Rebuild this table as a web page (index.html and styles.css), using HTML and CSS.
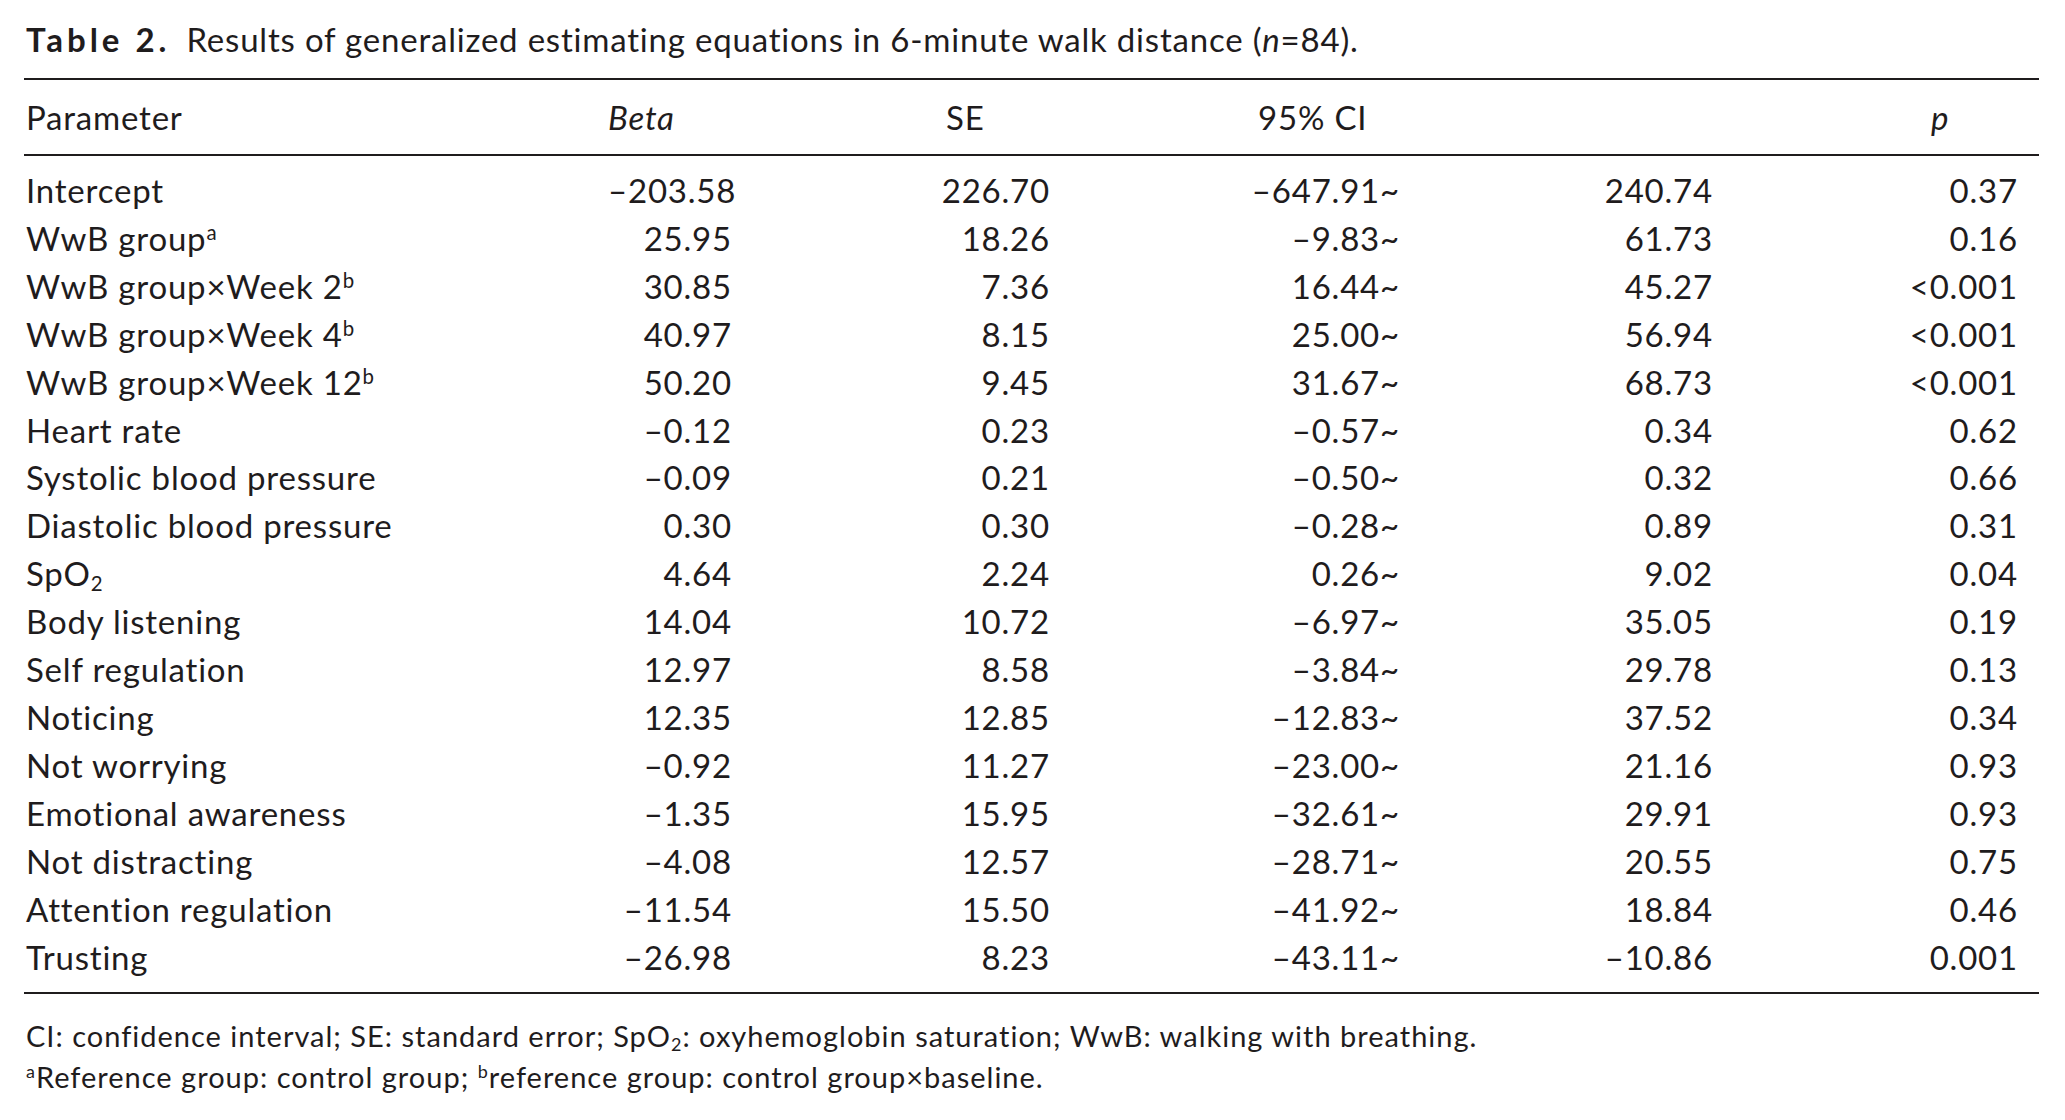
FILE: index.html
```html
<!DOCTYPE html>
<html lang="en">
<head>
<meta charset="utf-8">
<title>Table 2</title>
<link rel="stylesheet" href="styles.css">
</head>
<body>
<div class="page">
  <p class="caption"><span class="label">Table 2.</span>Results of generalized estimating equations in 6-minute walk distance (<i>n</i>=84).</p>
  <table class="results">
    <colgroup>
      <col class="c-param"><col class="c-beta"><col class="c-se"><col class="c-lo"><col class="c-hi"><col class="c-p">
    </colgroup>
    <thead>
      <tr>
        <th class="h-param">Parameter</th>
        <th class="h-beta"><i>Beta</i></th>
        <th class="h-se">SE</th>
        <th class="h-ci">95% CI</th>
        <th></th>
        <th class="h-p"><i>p</i></th>
      </tr>
    </thead>
    <tbody>
      <tr><td>Intercept</td><td>–203.58</td><td>226.70</td><td>–647.91~</td><td>240.74</td><td>0.37</td></tr>
      <tr><td>WwB group<sup>a</sup></td><td>25.95</td><td>18.26</td><td>–9.83~</td><td>61.73</td><td>0.16</td></tr>
      <tr><td>WwB group×Week 2<sup>b</sup></td><td>30.85</td><td>7.36</td><td>16.44~</td><td>45.27</td><td>&lt;0.001</td></tr>
      <tr><td>WwB group×Week 4<sup>b</sup></td><td>40.97</td><td>8.15</td><td>25.00~</td><td>56.94</td><td>&lt;0.001</td></tr>
      <tr><td>WwB group×Week 12<sup>b</sup></td><td>50.20</td><td>9.45</td><td>31.67~</td><td>68.73</td><td>&lt;0.001</td></tr>
      <tr><td>Heart rate</td><td>–0.12</td><td>0.23</td><td>–0.57~</td><td>0.34</td><td>0.62</td></tr>
      <tr><td>Systolic blood pressure</td><td>–0.09</td><td>0.21</td><td>–0.50~</td><td>0.32</td><td>0.66</td></tr>
      <tr><td>Diastolic blood pressure</td><td>0.30</td><td>0.30</td><td>–0.28~</td><td>0.89</td><td>0.31</td></tr>
      <tr><td>SpO<sub>2</sub></td><td>4.64</td><td>2.24</td><td>0.26~</td><td>9.02</td><td>0.04</td></tr>
      <tr><td>Body listening</td><td>14.04</td><td>10.72</td><td>–6.97~</td><td>35.05</td><td>0.19</td></tr>
      <tr><td>Self regulation</td><td>12.97</td><td>8.58</td><td>–3.84~</td><td>29.78</td><td>0.13</td></tr>
      <tr><td>Noticing</td><td>12.35</td><td>12.85</td><td>–12.83~</td><td>37.52</td><td>0.34</td></tr>
      <tr><td>Not worrying</td><td>–0.92</td><td>11.27</td><td>–23.00~</td><td>21.16</td><td>0.93</td></tr>
      <tr><td>Emotional awareness</td><td>–1.35</td><td>15.95</td><td>–32.61~</td><td>29.91</td><td>0.93</td></tr>
      <tr><td>Not distracting</td><td>–4.08</td><td>12.57</td><td>–28.71~</td><td>20.55</td><td>0.75</td></tr>
      <tr><td>Attention regulation</td><td>–11.54</td><td>15.50</td><td>–41.92~</td><td>18.84</td><td>0.46</td></tr>
      <tr><td>Trusting</td><td>–26.98</td><td>8.23</td><td>–43.11~</td><td>–10.86</td><td>0.001</td></tr>
    </tbody>
  </table>
  <div class="notes">
    <p>CI: confidence interval; SE: standard error; SpO<sub>2</sub>: oxyhemoglobin saturation; WwB: walking with breathing.</p>
    <p><sup>a</sup>Reference group: control group; <sup>b</sup>reference group: control group×baseline.</p>
  </div>
</div>
</body>
</html>
```
FILE: styles.css
```css
html, body {
  margin: 0;
  padding: 0;
  background: #ffffff;
}

body {
  font-family: Lato, "Open Sans", "Noto Sans", sans-serif;
  color: #1f1c1d;
}

.page {
  padding: 15px 26px 0 24px;
  width: 2015px;
}

.caption {
  margin: 0 0 15px 2px;
  font-size: 33px;
  letter-spacing: 0.8px;
  line-height: 48px;
}

.caption .label {
  font-weight: 700;
  letter-spacing: 4px;
  margin-right: 16px;
}

.results {
  width: 2015px;
  border-collapse: collapse;
  table-layout: fixed;
  font-size: 33px;
  letter-spacing: 0.8px;
  border-top: 2px solid #1f1c1d;
  border-bottom: 2px solid #1f1c1d;
}

.c-param { width: 584px; }
.c-beta { width: 124px; }
.c-se { width: 318px; }
.c-lo { width: 350px; }
.c-hi { width: 313px; }
.c-p { width: 326px; }

.results thead th {
  font-weight: 400;
  text-align: left;
  height: 74px;
  padding: 0;
  line-height: 48px;
  border-bottom: 2px solid #1f1c1d;
}

.results .h-param { padding-left: 2px; }
.results .h-se { padding-left: 214px; }
.results .h-ci { padding-left: 208px; }
.results .h-p { padding-left: 218px; }

.results td {
  padding: 0;
  height: 47.9px;
  line-height: 47.9px;
  text-align: right;
  white-space: nowrap;
}

.results td:first-child {
  text-align: left;
  padding-left: 2px;
}

.results td:last-child {
  padding-right: 21px;
}

.results tbody tr:first-child td {
  padding-top: 11px;
}

.results tbody tr:last-child td {
  padding-bottom: 11px;
}

sup {
  font-size: 0.62em;
  line-height: 0;
  vertical-align: 0.55em;
}

sub {
  font-size: 0.62em;
  line-height: 0;
  vertical-align: -0.25em;
}

.notes {
  margin-top: 21px;
  padding-left: 2px;
  font-size: 29px;
  letter-spacing: 1px;
}

.notes p {
  margin: 0;
  line-height: 41px;
}
```
